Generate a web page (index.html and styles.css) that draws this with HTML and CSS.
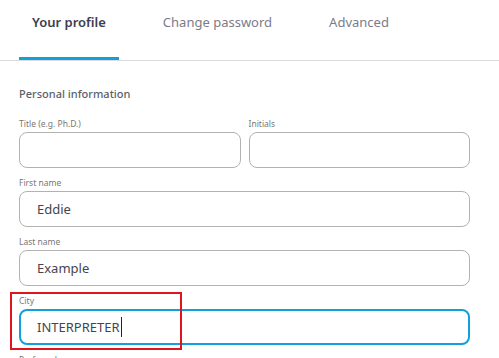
FILE: index.html
```
<!DOCTYPE html>
<html>
<head>
<meta charset="utf-8">
<link rel="stylesheet" href="styles.css">
</head>
<body>
<nav class="tabs">
  <div class="tab active">Your profile</div>
  <div class="tab">Change password</div>
  <div class="tab">Advanced</div>
</nav>
<main class="form">
  <h2 class="section">Personal information</h2>
  <div class="row">
    <div class="field">
      <div class="label">Title (e.g. Ph.D.)</div>
      <div class="input"></div>
    </div>
    <div class="field">
      <div class="label">Initials</div>
      <div class="input"></div>
    </div>
  </div>
  <div class="field">
    <div class="label">First name</div>
    <div class="input">Eddie</div>
  </div>
  <div class="field">
    <div class="label">Last name</div>
    <div class="input">Example</div>
  </div>
  <div class="field highlighted">
    <div class="label">City</div>
    <div class="input focus">INTERPRETER<span class="caret"></span></div>
    <div class="redbox"></div>
  </div>
  <div class="field">
    <div class="label">Preferred name</div>
    <div class="input"></div>
  </div>
</main>
</body>
</html>
```
FILE: styles.css
```
html, body {
  margin: 0;
  padding: 0;
  background: #ffffff;
  overflow: hidden;
}
body {
  width: 499px;
  height: 358px;
  font-family: "Noto Sans", "Open Sans", sans-serif;
  color: #444;
}
.tabs {
  display: flex;
  gap: 31px;
  padding-left: 19px;
  border-bottom: 1px solid #dcdcdc;
  height: 60px;
}
.tab {
  box-sizing: border-box;
  height: 60px;
  padding: 12px 13px 0;
  font-size: 13px;
  line-height: 20px;
  color: #7b7b8a;
  border-bottom: 3px solid transparent;
}
.tab.active {
  color: #3d3d50;
  font-weight: 600;
  border-bottom-color: #12a0dc;
}
.form {
  padding: 0 29px 0 19px;
}
.section {
  margin: 26px 0 17px;
  font-size: 11px;
  line-height: 14px;
  font-weight: 500;
  color: #5a5f6a;
}
.row {
  display: flex;
  gap: 8px;
}
.row .field {
  flex: 1;
}
.field {
  position: relative;
  margin-bottom: 9px;
}
.label {
  font-size: 8.5px;
  line-height: 12px;
  color: #777;
  margin-bottom: 2px;
}
.input {
  box-sizing: border-box;
  height: 36px;
  border: 1px solid #b2b2b2;
  border-radius: 8px;
  padding-left: 17px;
  font-size: 13px;
  line-height: 34px;
  color: #45454f;
  display: flex;
  align-items: center;
}
.input.focus {
  border: 2px solid #12a0dc;
  padding-left: 16px;
}
.caret {
  display: inline-block;
  width: 0;
  height: 20px;
  border-left: 1px solid #222;
  margin-left: 1px;
}
.redbox {
  position: absolute;
  left: -9px;
  top: -3px;
  width: 168px;
  height: 54px;
  border: 2px solid #e0141e;
}
```
